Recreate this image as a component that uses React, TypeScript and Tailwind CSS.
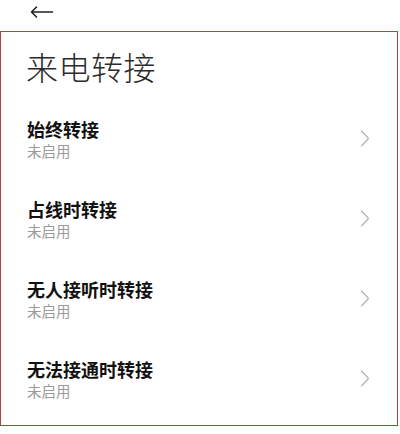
import React from "react";

const items = ["始终转接", "占线时转接", "无人接听时转接", "无法接通时转接"];

function Chevron() {
  return (
    <svg width="10" height="17" viewBox="0 0 10 17" fill="none">
      <path d="M1.5 1 L8.5 8.5 L1.5 16" stroke="#b3b3b3" strokeWidth="1.2" strokeLinecap="round" strokeLinejoin="round" />
    </svg>
  );
}

export default function App() {
  return (
    <div className="w-[400px] h-[434px] bg-white font-['Noto_Sans_CJK_SC','Noto_Sans',sans-serif]">
      <div className="h-[31px] pl-[30px] flex items-start pt-[4px]">
        <svg width="24" height="16" viewBox="0 0 24 16" fill="none">
          <path d="M1.5 8 H22.5 M1.5 8 L6.5 3 M1.5 8 L6.5 13" stroke="#222" strokeWidth="1.6" strokeLinecap="round" strokeLinejoin="round" />
        </svg>
      </div>
      <div className="w-[398px] h-[395px] border-[1.5px] border-[#b2403e] flex flex-col">
        <div className="h-[66px] pl-[25px] flex items-center pt-[2px] text-[32px] font-light text-[#2b2b2b] leading-none tracking-[0.5px]">
          来电转接
        </div>
        {items.map((t) => (
          <div key={t} className="h-[80px] flex items-center justify-between pl-[26px] pr-[27px]">
            <div className="flex flex-col">
              <div className="text-[18px] font-semibold text-[#111] leading-[24px]">{t}</div>
              <div className="text-[14.5px] text-[#9a9a9a] leading-[19px]">未启用</div>
            </div>
            <Chevron />
          </div>
        ))}
      </div>
    </div>
  );
}
